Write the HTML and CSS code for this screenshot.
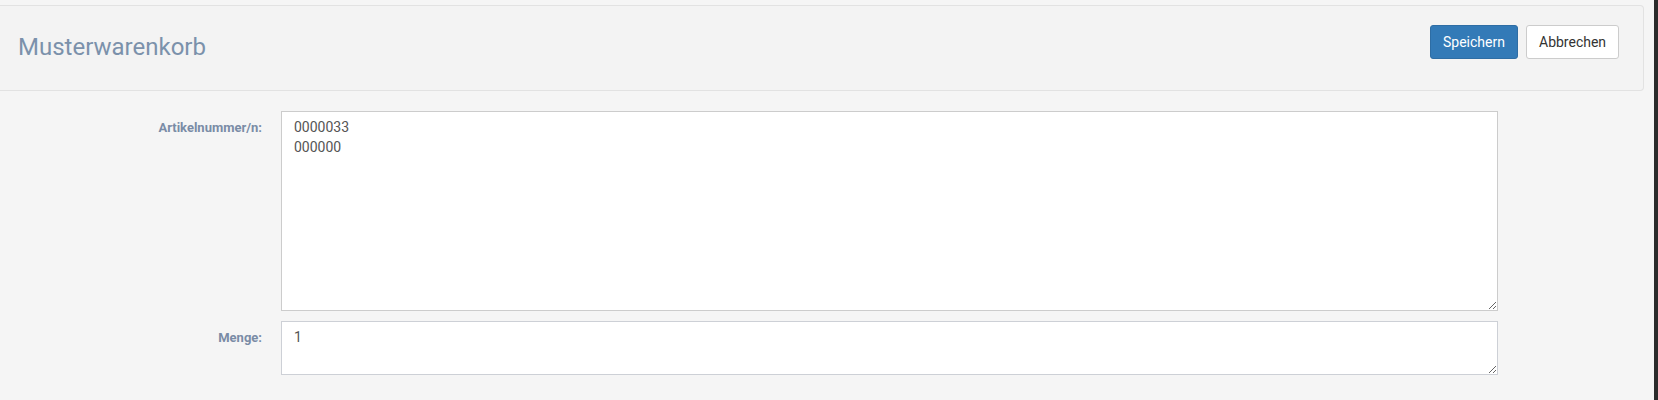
FILE: index.html
```html
<!DOCTYPE html>
<html lang="de">
<head>
<meta charset="utf-8">
<title>Musterwarenkorb</title>
<link rel="stylesheet" href="styles.css">
</head>
<body>
<div class="page">
  <div class="main">
    <div class="panel-header">
      <h1 class="title">Musterwarenkorb</h1>
      <div class="actions">
        <button class="btn btn-primary" type="button">Speichern</button>
        <button class="btn btn-default" type="button">Abbrechen</button>
      </div>
    </div>
    <form class="form">
      <div class="form-row">
        <label class="form-label" for="art">Artikelnummer/n:</label>
        <textarea id="art" class="field field-tall">0000033
000000</textarea>
      </div>
      <div class="form-row">
        <label class="form-label" for="menge">Menge:</label>
        <textarea id="menge" class="field field-short">1</textarea>
      </div>
    </form>
  </div>
  <div class="edge"></div>
</div>
</body>
</html>
```
FILE: styles.css
```css
html, body {
  margin: 0;
  padding: 0;
  height: 100%;
}
body {
  background: #f5f5f5;
  font-family: Roboto, "Liberation Sans", Arial, sans-serif;
  overflow: hidden;
}
.page {
  display: flex;
  height: 400px;
}
.main {
  flex: 1;
  padding-top: 5px;
}
.edge {
  width: 4px;
  background: #2b2b2b;
}
.panel-header {
  box-sizing: border-box;
  height: 86px;
  width: 1644px;
  background: #f3f3f3;
  border: 1px solid #e2e2e2;
  border-left: none;
  border-radius: 0 4px 4px 0;
  padding: 19px 24px 0 18px;
  display: flex;
  justify-content: space-between;
  align-items: flex-start;
}
.title {
  margin: 8px 0 0;
  font-size: 24px;
  line-height: 28px;
  font-weight: 400;
  color: #7b91ab;
}
.actions {
  display: flex;
  gap: 8px;
}
.btn {
  box-sizing: border-box;
  height: 34px;
  font-family: Roboto, "Liberation Sans", Arial, sans-serif;
  font-size: 14px;
  line-height: 20px;
  padding: 6px 12px;
  border-radius: 3px;
  border: 1px solid;
  cursor: pointer;
}
.btn-primary {
  width: 88px;
  background: #337ab7;
  border-color: #2e6da4;
  color: #fff;
}
.btn-default {
  width: 93px;
  background: #fff;
  border-color: #ccc;
  color: #333;
}
.form {
  margin-top: 20px;
  display: flex;
  flex-direction: column;
  gap: 10px;
}
.form-row {
  display: grid;
  grid-template-columns: 262px 1217px;
  column-gap: 19px;
  align-items: start;
}
.form-label {
  text-align: right;
  font-size: 13px;
  line-height: 16px;
  font-weight: 700;
  color: #7a8ca6;
  padding-top: 9px;
}
.field {
  box-sizing: border-box;
  width: 1217px;
  margin: 0;
  border: 1px solid #cccccc;
  border-radius: 0;
  background: #fff;
  padding: 5px 12px;
  font-family: Roboto, "Liberation Sans", Arial, sans-serif;
  font-size: 14px;
  line-height: 20px;
  color: #555;
  resize: both;
  outline: none;
}
.field-tall {
  height: 200px;
}
.field-short {
  height: 54px;
  border-color: #cdd0d6;
}
```
